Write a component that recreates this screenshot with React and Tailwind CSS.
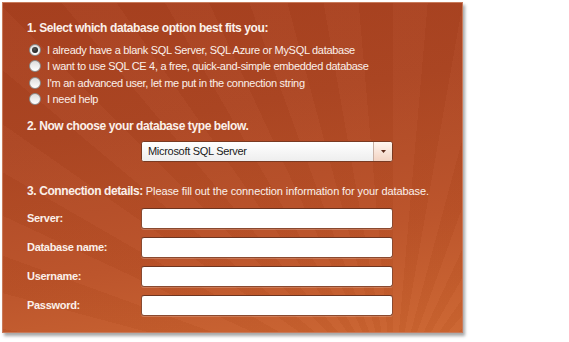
import React from "react";

function Radio({ checked }) {
  return (
    <span className="relative flex h-[12px] w-[12px] shrink-0 items-center justify-center rounded-full border border-[#8c8c8c] bg-[linear-gradient(#dcdcdc,#ffffff)]">
      {checked && <span className="h-[6px] w-[6px] rounded-full bg-[radial-gradient(circle_at_40%_35%,#555,#111)]" />}
    </span>
  );
}

function Field({ label }) {
  return (
    <div className="flex h-[29px] items-center">
      <span className="w-[114px] font-bold">{label}</span>
      <div className="h-[21px] w-[252px] rounded-[3px] border border-[#8a4a30] border-t-[#6e3520] bg-white shadow-[0_1px_0_rgba(255,255,255,0.2)]" />
    </div>
  );
}

export default function App() {
  const options = [
    "I already have a blank SQL Server, SQL Azure or MySQL database",
    "I want to use SQL CE 4, a free, quick-and-simple embedded database",
    "I'm an advanced user, let me put in the connection string",
    "I need help",
  ];
  return (
    <div className="h-[342px] w-[569px] bg-white pl-[2px] pt-[2px] font-['Liberation_Sans',sans-serif] text-[11px] tracking-[-0.3px] text-[#fbf0ea]">
      <div className="h-[331px] w-[461px] border border-[#c87a5a] shadow-[2px_3px_3px_rgba(0,0,0,0.35)] [background-image:repeating-conic-gradient(from_0deg_at_85%_120%,rgba(255,255,255,0.02)_0deg_5deg,rgba(0,0,0,0.02)_5deg_10deg),linear-gradient(170deg,#a8401f_0%,#ad4623_35%,#bb5228_70%,#cc6530_100%)]">
        <div className="pl-[24px] pt-[17px]">
          <div className="text-[12px] font-bold leading-[16px] tracking-[-0.4px]">1. Select which database option best fits you:</div>
          <div className="mt-[6px] flex flex-col">
            {options.map((o, i) => (
              <label key={i} className="flex h-[16.3px] items-center gap-[6px] pl-[2px] leading-[16px]">
                <Radio checked={i === 0} />
                <span>{o}</span>
              </label>
            ))}
          </div>
          <div className="mt-[11px] text-[12px] font-bold leading-[16px] tracking-[-0.4px]">2. Now choose your database type below.</div>
          <div className="ml-[114px] mt-[7px] flex h-[21px] w-[252px] overflow-hidden rounded-[3px] border border-[#7a3a22] bg-white">
            <div className="flex flex-1 items-center bg-[linear-gradient(#ffffff,#eeeeee)] pl-[6px] text-[#1a1a1a]">Microsoft SQL Server</div>
            <div className="flex w-[19px] items-center justify-center border-l border-[#c9b0a4] bg-[linear-gradient(#fff6f0,#f3d3c2)]">
              <svg width="5" height="3" viewBox="0 0 5 3"><path d="M0 0h5L2.5 3z" fill="#5a2a1a" /></svg>
            </div>
          </div>
          <div className="mt-[21px] text-[12px] leading-[16px]">
            <span className="font-bold tracking-[-0.4px]">3. Connection details:</span>
            <span className="text-[11px] tracking-[-0.1px]"> Please fill out the connection information for your database.</span>
          </div>
          <div className="mt-[5px] flex flex-col">
            <Field label="Server:" />
            <Field label="Database name:" />
            <Field label="Username:" />
            <Field label="Password:" />
          </div>
        </div>
      </div>
    </div>
  );
}
